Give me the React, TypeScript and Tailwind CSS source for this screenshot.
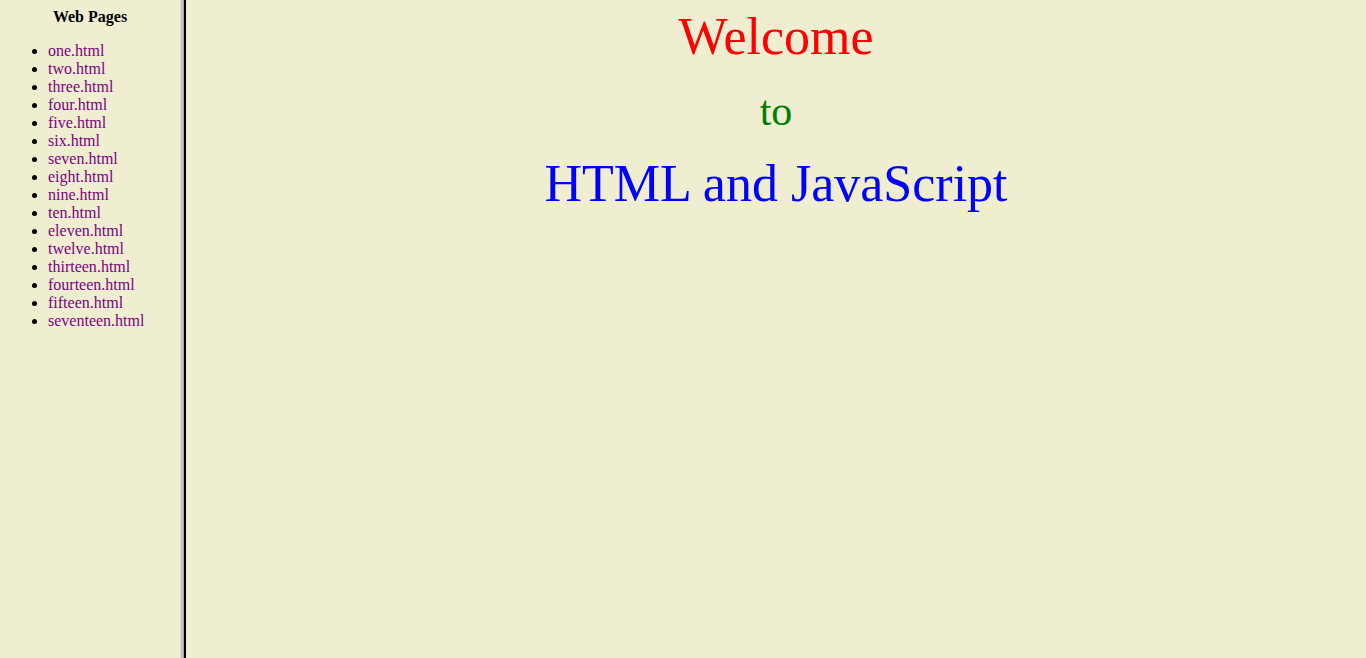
const pages = [
  "one",
  "two",
  "three",
  "four",
  "five",
  "six",
  "seven",
  "eight",
  "nine",
  "ten",
  "eleven",
  "twelve",
  "thirteen",
  "fourteen",
  "fifteen",
  "seventeen",
];

const App = () => {
  return (
    <div className="flex h-[658px] w-full bg-[#efeed0] font-['Liberation_Serif','Times_New_Roman',serif] text-black">
      {/* left frame: page list */}
      <div className="w-[180px] shrink-0 p-2">
        <div className="text-center text-[16px] font-bold leading-[18px]">
          Web Pages
        </div>
        <ul className="my-4 list-disc pl-10 text-[16px] leading-[18px]">
          {pages.map((p) => (
            <li key={p}>
              <a href="#" className="text-[#800080]">
                {p}.html
              </a>
            </li>
          ))}
        </ul>
      </div>

      {/* frame border */}
      <div className="flex w-[6px] shrink-0">
        <div className="w-px bg-[#dcdcdc]" />
        <div className="w-[2px] bg-[#c4c4c4]" />
        <div className="w-px bg-[#a8a8a8]" />
        <div className="w-[2px] bg-black" />
      </div>

      {/* main frame */}
      <div className="flex-1 p-2 text-center">
        <div className="text-[52px] leading-[58px] text-[#ff0000]">Welcome</div>
        <div className="mt-[22px] text-[42px] leading-[46px] text-[#008000]">
          to
        </div>
        <div className="mt-[20px] text-[52px] leading-[60px] text-[#0000ff]">
          HTML and JavaScript
        </div>
      </div>
    </div>
  );
};

export default App;
